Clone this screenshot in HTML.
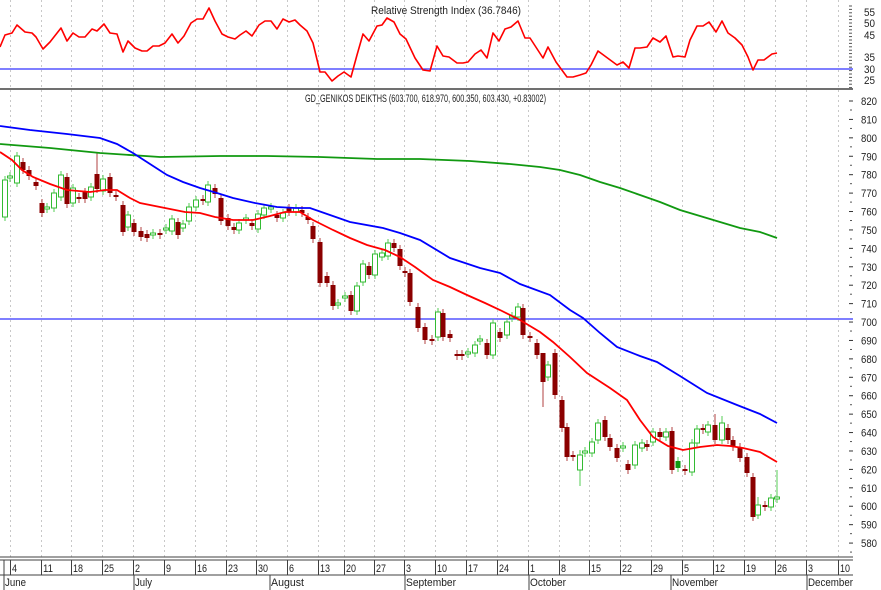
<!DOCTYPE html>
<html><head><meta charset="utf-8"><style>
html,body{margin:0;padding:0;background:#fff;width:881px;height:590px;overflow:hidden}
svg{display:block}
text{font-family:"Liberation Sans Narrow","Liberation Sans",Arial,sans-serif;font-size:11px;fill:#222}
</style></head><body>
<svg id="s" width="881" height="590" viewBox="0 0 881 590" xmlns="http://www.w3.org/2000/svg">
<g id="grid" stroke="#c8c8c8" stroke-width="1" stroke-dasharray="2,3"></g>
<line x1="0" y1="69" x2="853" y2="69" stroke="#3333ff" stroke-width="1.2"/>
<line x1="0" y1="319" x2="853" y2="319" stroke="#3333ff" stroke-width="1.2"/>
<line x1="0" y1="89" x2="853" y2="89" stroke="#707070" stroke-width="2"/>
<text x="371" y="14" textLength="150" lengthAdjust="spacingAndGlyphs">Relative Strength Index (36.7846)</text>
<text x="305" y="102" textLength="241" lengthAdjust="spacingAndGlyphs">GD_GENIKOS DEIKTHS (603.700, 618.970, 600.350, 603.430, +0.83002)</text>
<polyline id="rsi" fill="none" stroke="#ff0000" stroke-width="1.6" stroke-linejoin="round"/>
<g id="candles"></g>
<polyline id="ma200" fill="none" stroke="#119911" stroke-width="1.8"/>
<polyline id="ma50" fill="none" stroke="#0000ff" stroke-width="1.8"/>
<polyline id="ma20" fill="none" stroke="#ff0000" stroke-width="1.8"/>
<g id="axis"></g>
<line x1="0" y1="557" x2="853" y2="557" stroke="#404040" stroke-width="1"/>
<line x1="0" y1="560" x2="853" y2="560" stroke="#404040" stroke-width="1"/>
<line x1="0" y1="575" x2="853" y2="575" stroke="#404040" stroke-width="1"/>
<g id="dates"></g>
</svg>
<script>
var NS="http://www.w3.org/2000/svg";
function el(p,t,a,txt){var e=document.createElementNS(NS,t);for(var k in a)e.setAttribute(k,a[k]);if(txt!==undefined)e.textContent=txt;document.getElementById(p).appendChild(e);return e;}
function pts(a){var s=[];for(var i=0;i<a.length;i+=2)s.push(a[i]+","+a[i+1]);return s.join(" ");}
function tl(s){return Math.round(s.length*5.2);}
var weeks=[[12,"4"],[43,"11"],[73,"18"],[104,"25"],[135,"2"],[166,"9"],[197,"16"],[228,"23"],[258,"30"],[289,"6"],[320,"13"],[346,"20"],[376,"27"],[406,"3"],[437,"10"],[468,"17"],[499,"24"],[530,"1"],[561,"8"],[591,"15"],[622,"22"],[653,"29"],[684,"5"],[715,"12"],[746,"19"],[777,"26"],[808,"3"],[840,"10"]];
weeks.forEach(function(w){var x=w[0]-1.5;
 el("grid","line",{x1:x,y1:0,x2:x,y2:557});
 el("dates","line",{x1:x,y1:560,x2:x,y2:575,stroke:"#404040"});
 el("dates","text",{x:w[0],y:572,textLength:tl(w[1]),lengthAdjust:"spacingAndGlyphs"},w[1]);});
el("dates","line",{x1:4,y1:560,x2:4,y2:575,stroke:"#404040"});
[[4,"June",21],[134,"July",17],[270,"August",33],[405,"September",50],[529,"October",36],[671,"November",46],[807,"December",45]].forEach(function(m){
 el("dates","line",{x1:m[0],y1:575,x2:m[0],y2:590,stroke:"#404040"});
 el("dates","text",{x:m[0]+1,y:586,textLength:m[2],lengthAdjust:"spacingAndGlyphs"},m[1]);});
for(var p=820;p>=580;p-=10){var y=101+(820-p)*1.842;
 el("axis","line",{x1:849,y1:y,x2:853,y2:y,stroke:"#333"});
 el("axis","line",{x1:850,y1:y+9,x2:852,y2:y+9,stroke:"#555"});
 el("axis","text",{x:861,y:y+4,textLength:16,lengthAdjust:"spacingAndGlyphs"},String(p));}
[[55,12],[50,23],[45,35],[35,57],[30,69],[25,80]].forEach(function(r){
 el("axis","text",{x:864,y:r[1]+4,textLength:11,lengthAdjust:"spacingAndGlyphs"},String(r[0]));});
for(var y=6;y<88;y+=3.4)el("axis","line",{x1:849,y1:y,x2:852,y2:y,stroke:"#555"});
document.getElementById("rsi").setAttribute("points",pts([0,47,5,35,12,33,17,25,25,32,32,33,36,37,43,49,50,42,61,28,67,41,73,33,79,37,85,37,92,29,97,31,104,24,110,33,117,34,123,52,128,41,135,48,142,51,147,51,153,46,159,46,165,43,172,34,178,43,184,36,191,23,197,19,203,19,209,8,215,21,222,34,228,37,235,39,240,35,246,31,252,36,259,25,265,21,271,21,277,29,283,19,289,22,295,20,300,25,307,31,313,43,320,72,325,72,332,81,338,76,344,72,351,77,357,55,363,34,369,41,377,26,382,25,387,18,394,22,400,34,406,39,415,58,423,70,430,71,437,46,443,56,449,57,457,63,463,63,468,62,475,54,481,50,487,58,493,33,499,41,505,29,511,27,518,21,525,38,530,38,543,58,548,47,556,62,567,77,573,77,580,75,586,73,591,65,598,51,617,65,623,62,629,68,635,48,640,48,647,47,653,38,660,42,666,36,673,57,678,56,685,57,690,40,697,26,703,26,709,22,716,32,722,21,728,33,735,38,742,45,748,57,753,70,758,60,764,60,772,54,777,53]));
document.getElementById("ma200").setAttribute("points",pts([0,144,50,148,100,153,160,157,220,156,267,156,320,157,377,159,420,159,470,161,510,164,540,167,560,170,580,175,600,182,620,188,640,195,660,202,680,210,700,216,720,222,740,228,760,232,777,238]));
document.getElementById("ma50").setAttribute("points",pts([0,126,30,130,67,134,100,138,117,144,133,153,150,164,167,175,183,182,200,188,217,193,233,198,255,203,277,207,295,208,310,208,330,215,350,222,383,228,400,233,420,240,450,258,480,268,500,273,520,284,550,295,570,310,583,318,600,333,617,347,640,356,657,362,680,376,707,393,737,405,760,414,777,423]));
document.getElementById("ma20").setAttribute("points",pts([0,152,12,160,22,170,33,177,50,184,67,190,90,192,105,190,117,190,130,198,140,203,150,205,165,208,185,212,200,213,215,217,233,220,253,220,270,216,285,212,300,212,313,220,333,230,350,238,367,245,385,250,400,257,415,267,433,280,450,287,467,295,485,303,500,310,520,320,540,332,553,342,570,357,587,373,610,388,627,400,640,420,653,437,668,446,683,450,700,447,717,445,730,446,743,448,760,452,777,462]));
var C=[[5,180,217,0],[10,176,178,0],[17,156,183,0],[23,162,170,1],[29,170,176,1],[36,182,186,1],[42,203,213,1],[47,207,209,0],[54,193,208,0],[61,175,197,0],[67,177,204,1],[73,188,203,0],[79,197,199,1],[85,192,199,1],[91,187,197,0],[97,174,189,1,152],[103,179,191,0],[110,177,193,1],[116,195,197,1],[123,205,232,1],[128,215,227,0],[134,223,232,1],[141,231,237,1],[147,234,238,1],[153,233,235,0],[160,233,235,1],[166,228,230,0],[172,219,231,0],[178,222,235,1],[183,224,228,0],[189,207,221,0],[196,200,207,0],[203,199,201,1],[208,185,202,0],[215,188,194,1],[221,198,221,1],[228,218,226,1],[234,227,230,1],[239,223,230,0],[246,218,220,0],[252,223,226,1],[258,214,229,0],[264,208,215,0],[271,207,209,0],[277,215,218,1],[283,213,218,0],[289,208,212,1],[296,208,212,0],[302,210,213,1],[308,217,220,1],[313,226,239,1],[320,242,283,1],[327,276,283,1],[333,285,306,1],[338,303,305,0],[345,296,298,0],[351,295,311,1],[357,286,311,0],[363,264,282,0],[369,266,275,1],[375,254,275,0],[382,253,257,0],[388,243,256,0],[394,243,248,1],[400,249,266,1],[405,271,273,1],[410,273,302,1],[418,307,328,1],[425,327,340,1],[432,339,341,1],[438,312,337,0],[443,313,337,1],[450,334,338,1],[457,354,356,1],[462,354,356,1],[468,352,354,0],[475,345,353,0],[480,339,341,0],[487,343,355,1],[493,323,355,0],[500,332,338,1],[507,322,335,0],[512,316,318,0],[518,307,317,0],[523,308,335,1],[530,336,338,1],[537,343,355,1],[543,353,382,1,353,407],[548,365,377,0],[555,353,395,1],[562,400,428,1],[567,427,457,1],[573,455,457,1],[580,455,470,0,450,486],[585,451,453,0],[592,442,453,0],[598,423,440,0],[605,420,437,1],[610,438,447,1],[617,448,458,1],[623,446,448,0],[628,464,470,1],[635,445,465,0],[642,443,448,0],[647,444,447,1],[653,432,442,0],[660,432,437,1],[666,432,437,0],[672,431,470,1],[678,461,468,2],[685,469,471,1],[692,443,472,0],[697,429,443,0],[703,428,430,1],[708,425,432,0],[715,425,440,1,414],[722,423,440,0,416],[728,428,440,1],[733,440,447,1],[740,447,458,1],[747,457,473,1],[753,477,517,1],[758,505,515,0,497],[765,505,507,1],[771,498,507,0],[777,497,499,0,470]];
C.forEach(function(c){var x=c[0],t=c[1],b=c[2],d=c[3];
 var wt=c[4]!==undefined?c[4]:t-4, wb=c[5]!==undefined?c[5]:b+4;
 el("candles","line",{x1:x,y1:wt,x2:x,y2:wb,stroke:d==1?"#b04040":"#55cc55","stroke-width":1});
 if(d==1||d==2)el("candles","rect",{x:x-2.5,y:t,width:5,height:Math.max(b-t,2),fill:d==1?"#8b0000":"#119911"});
 else el("candles","rect",{x:x-2.5,y:t,width:5,height:Math.max(b-t,2),fill:"#fff",stroke:"#33bb33","stroke-width":1});
});
</script>
</body></html>
